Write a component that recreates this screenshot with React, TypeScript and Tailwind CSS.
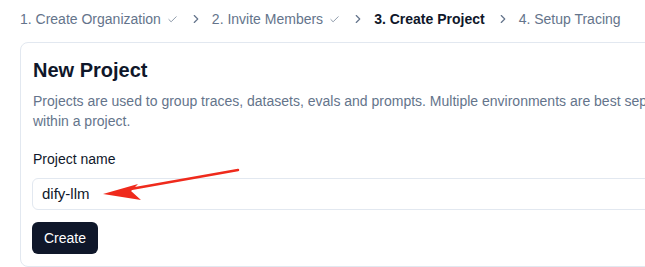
import { Check, ChevronRight } from "lucide-react";

const steps = [
  { label: "1. Create Organization", done: true },
  { label: "2. Invite Members", done: true },
  { label: "3. Create Project", current: true },
  { label: "4. Setup Tracing" },
];

export default function App() {
  return (
    <div
      className="relative w-[645px] h-[267px] overflow-hidden bg-white text-[#0f172a]"
      style={{ fontFamily: '"Liberation Sans", Arial, sans-serif' }}
    >
      {/* breadcrumb of onboarding steps */}
      <div className="flex items-center h-[38px] pl-[20px] text-[14px] text-[#64748b] whitespace-nowrap">
        {steps.map((step, index) => (
          <div key={index} className="flex items-center">
            {index > 0 && (
              <ChevronRight size={14} strokeWidth={2} className="ml-[11px] mr-[9px] text-[#64748b]" />
            )}
            <span className={step.current ? "font-bold text-[#0f172a]" : ""}>{step.label}</span>
            {step.done && <Check size={11} strokeWidth={1.6} className="ml-[6px] text-[#64748b]" />}
          </div>
        ))}
      </div>

      <div className="ml-[20px] mt-[4px] w-[756px] rounded-lg border border-[#e2e8f0] px-[11px] pt-[13px] pb-[12px]">
        <h1 className="pl-[1px] text-[20px] font-bold leading-[28px]">New Project</h1>
        <p className="mt-[7px] pl-[1px] text-[14px] leading-[20px] text-[#64748b]">
          Projects are used to group traces, datasets, evals and prompts. Multiple environments are best
          separated via tags within a project.
        </p>

        <label className="block mt-[18px] pl-[1px] text-[14px] leading-[20px]">Project name</label>
        <div className="mt-[9px] flex items-center h-[32px] rounded-md border border-[#e2e8f0] px-[9px] text-[15px]">
          dify-llm
        </div>
        <button className="mt-[12px] h-[32px] rounded-md bg-[#0f172a] px-[12px] text-[14px] text-white">
          Create
        </button>
      </div>

      {/* red annotation arrow */}
      <svg className="absolute left-0 top-0" width="645" height="267">
        <line x1="238" y1="170" x2="125" y2="190" stroke="#ef2a1c" strokeWidth="2.5" strokeLinecap="round" />
        <polygon points="103,194 138,184 131,191 141,200" fill="#ef2a1c" />
      </svg>
    </div>
  );
}
